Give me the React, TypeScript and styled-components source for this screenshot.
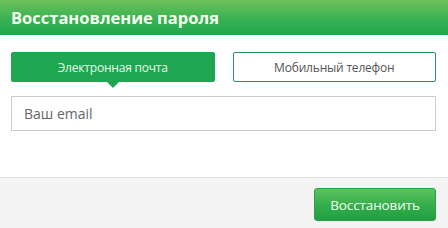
import React, { useState } from 'react';
import styled, { createGlobalStyle } from 'styled-components';

const GlobalStyle = createGlobalStyle`
  html, body {
    margin: 0;
    padding: 0;
    background: #ffffff;
  }
  body {
    font-family: "Open Sans", "Noto Sans", sans-serif;
  }
`;

const Dialog = styled.div`
  width: 448px;
  height: 228px;
  display: flex;
  flex-direction: column;
  background: #ffffff;
`;

const Header = styled.div`
  height: 35px;
  display: flex;
  align-items: center;
  padding: 0 11px;
  background: linear-gradient(to bottom, #6fc15c 0%, #3cb353 50%, #1fa74f 100%);
  color: #f4fff0;
  font-size: 16.5px;
  font-weight: 700;
  box-sizing: border-box;
`;

const Body = styled.div`
  flex: 1;
  padding: 17px 12px 0 11px;
  display: flex;
  flex-direction: column;
`;

const Tabs = styled.div`
  display: grid;
  grid-template-columns: 1fr 1fr;
  gap: 18px;
`;

const Tab = styled.button<{ $active?: boolean }>`
  position: relative;
  height: 30px;
  border-radius: 2px;
  font-family: "Open Sans", "Noto Sans", sans-serif;
  font-size: 12px;
  letter-spacing: -0.2px;
  cursor: pointer;
  border: 1px solid ${p => (p.$active ? '#1fa651' : '#2a8f56')};
  background: ${p => (p.$active ? '#1fa651' : '#ffffff')};
  color: ${p => (p.$active ? '#e9fbe9' : '#555555')};
  padding: 0;

  &::after {
    content: '';
    display: ${p => (p.$active ? 'block' : 'none')};
    position: absolute;
    left: 50%;
    bottom: -7px;
    margin-left: -7px;
    border-left: 7px solid transparent;
    border-right: 7px solid transparent;
    border-top: 7px solid #1fa651;
  }
`;

const Input = styled.input`
  margin-top: 14px;
  height: 35px;
  box-sizing: border-box;
  border: 1px solid #cccccc;
  padding: 0 12px;
  font-family: "Open Sans", "Noto Sans", sans-serif;
  font-size: 14px;
  color: #333;
  outline: none;

  &::placeholder {
    color: #666666;
  }
`;

const Footer = styled.div`
  height: 51px;
  box-sizing: border-box;
  border-top: 1px solid #e2e2e2;
  background: #f4f4f4;
  display: flex;
  justify-content: flex-end;
  align-items: flex-start;
  padding: 10px 12px 0 0;
`;

const SubmitButton = styled.button`
  width: 122px;
  height: 33px;
  border: 1px solid #2c9f48;
  border-radius: 3px;
  background: linear-gradient(to bottom, #5ec35c 0%, #33ad4b 55%, #229f44 100%);
  color: #f2fff0;
  font-family: "Open Sans", "Noto Sans", sans-serif;
  font-size: 13.5px;
  letter-spacing: -0.1px;
  cursor: pointer;
  padding: 0;
`;

export default function App() {
  const [tab, setTab] = useState<'email' | 'phone'>('email');
  return (
    <>
      <GlobalStyle />
      <Dialog>
        <Header>Восстановление пароля</Header>
        <Body>
          <Tabs>
            <Tab $active={tab === 'email'} onClick={() => setTab('email')}>
              Электронная почта
            </Tab>
            <Tab $active={tab === 'phone'} onClick={() => setTab('phone')}>
              Мобильный телефон
            </Tab>
          </Tabs>
          <Input placeholder={tab === 'email' ? 'Ваш email' : 'Ваш телефон'} />
        </Body>
        <Footer>
          <SubmitButton>Восстановить</SubmitButton>
        </Footer>
      </Dialog>
    </>
  );
}
